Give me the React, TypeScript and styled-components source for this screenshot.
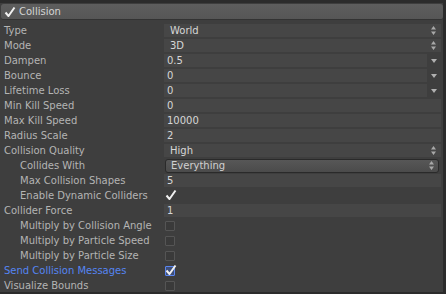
import React from "react";
import styled, { createGlobalStyle } from "styled-components";

const GlobalStyle = createGlobalStyle`
  html, body {
    margin: 0;
    padding: 0;
    background: #3e3e3e;
  }
`;

const Panel = styled.div`
  width: 446px;
  height: 294px;
  box-sizing: border-box;
  background: #3e3e3e;
  border-top: 3px solid #2c2c2c;
  border-right: 3px solid #2b2b2b;
  border-bottom: 2px solid #2b2b2b;
  font-family: "DejaVu Sans", sans-serif;
  font-size: 10px;
  color: #b4b4b4;
  overflow: hidden;
`;

const Header = styled.div`
  height: 15px;
  margin: 1px 0 3px 1px;
  display: flex;
  align-items: center;
  gap: 3px;
  padding-left: 3px;
  background: linear-gradient(#5e5e5e, #565656);
  border-bottom: 1px solid #333;
  border-radius: 3px;
  color: #d4d4d4;
`;

const Row = styled.div`
  height: 15px;
  display: grid;
  grid-template-columns: 164px 1fr;
  align-items: center;
  padding-right: 2px;
`;

const Label = styled.div<{ $indent?: boolean; $blue?: boolean }>`
  padding-left: ${(p) => (p.$indent ? 20 : 4)}px;
  white-space: nowrap;
  color: ${(p) => (p.$blue ? "#5585f2" : "#b4b4b4")};
`;

const Field = styled.div<{ $pad?: number }>`
  height: 13px;
  display: flex;
  align-items: center;
  justify-content: space-between;
  padding-left: ${(p) => p.$pad ?? 3}px;
  padding-right: 5px;
  background: #464646;
  color: #d6d6d6;
`;

const CurveWrap = styled.div`
  display: flex;
  align-items: center;
`;

const CurveField = styled(Field)`
  flex: 1;
`;

const CurveArrow = styled.div`
  width: 14px;
  display: flex;
  justify-content: center;
`;

const Popup = styled.div`
  height: 12px;
  margin: 0 2px 0 1px;
  display: flex;
  align-items: center;
  justify-content: space-between;
  padding: 0 4px 0 5px;
  border: 1px solid #2a2a2a;
  border-radius: 3px;
  background: linear-gradient(#575757, #4b4b4b);
  color: #d0d0d0;
`;

const Box = styled.div<{ $on?: boolean; $focus?: boolean }>`
  width: 8px;
  height: 8px;
  margin-left: 1px;
  position: relative;
  border: 1px solid ${(p) => (p.$focus ? "#5a86f0" : p.$on ? "transparent" : "#555")};
  background: ${(p) => (p.$focus ? "#3f4f78" : p.$on ? "transparent" : "#3a3a3a")};
  border-radius: 1px;

  svg {
    position: absolute;
    left: -1px;
    top: -3px;
  }
`;

const Check = () => (
  <svg width="12" height="12" viewBox="0 0 12 12">
    <path d="M1.5 6.5 L4.5 10 L10.5 1.5" fill="none" stroke="#f0f0f0" strokeWidth="2" strokeLinejoin="round" />
  </svg>
);

const UpDown = () => (
  <svg width="5" height="9" viewBox="0 0 5 9">
    <path d="M2.5 0 L5 3.5 H0 Z M0 5.5 H5 L2.5 9 Z" fill="#a8a8a8" />
  </svg>
);

const Down = () => (
  <svg width="6" height="4" viewBox="0 0 6 4">
    <path d="M0 0 H6 L3 4 Z" fill="#b0b0b0" />
  </svg>
);

type Item =
  | { kind: "drop"; label: string; value: string; indent?: boolean }
  | { kind: "num"; label: string; value: string; indent?: boolean }
  | { kind: "curve"; label: string; value: string }
  | { kind: "popup"; label: string; value: string; indent?: boolean }
  | { kind: "check"; label: string; on: boolean; indent?: boolean; blue?: boolean };

const items: Item[] = [
  { kind: "drop", label: "Type", value: "World" },
  { kind: "drop", label: "Mode", value: "3D" },
  { kind: "curve", label: "Dampen", value: "0.5" },
  { kind: "curve", label: "Bounce", value: "0" },
  { kind: "curve", label: "Lifetime Loss", value: "0" },
  { kind: "num", label: "Min Kill Speed", value: "0" },
  { kind: "num", label: "Max Kill Speed", value: "10000" },
  { kind: "num", label: "Radius Scale", value: "2" },
  { kind: "drop", label: "Collision Quality", value: "High" },
  { kind: "popup", label: "Collides With", value: "Everything", indent: true },
  { kind: "num", label: "Max Collision Shapes", value: "5", indent: true },
  { kind: "check", label: "Enable Dynamic Colliders", on: true, indent: true },
  { kind: "num", label: "Collider Force", value: "1" },
  { kind: "check", label: "Multiply by Collision Angle", on: false, indent: true },
  { kind: "check", label: "Multiply by Particle Speed", on: false, indent: true },
  { kind: "check", label: "Multiply by Particle Size", on: false, indent: true },
  { kind: "check", label: "Send Collision Messages", on: true, blue: true },
  { kind: "check", label: "Visualize Bounds", on: false },
];

const renderValue = (it: Item) => {
  switch (it.kind) {
    case "drop":
      return (
        <Field $pad={6}>
          <span>{it.value}</span>
          <UpDown />
        </Field>
      );
    case "num":
      return (
        <Field>
          <span>{it.value}</span>
        </Field>
      );
    case "curve":
      return (
        <CurveWrap>
          <CurveField>
            <span>{it.value}</span>
          </CurveField>
          <CurveArrow>
            <Down />
          </CurveArrow>
        </CurveWrap>
      );
    case "popup":
      return (
        <Popup>
          <span>{it.value}</span>
          <UpDown />
        </Popup>
      );
    case "check":
      return (
        <div>
          <Box $on={it.on} $focus={it.blue}>
            {it.on && <Check />}
          </Box>
        </div>
      );
  }
};

const App: React.FC = () => {
  return (
    <>
      <GlobalStyle />
      <Panel>
        <Header>
          <Check />
          <span>Collision</span>
        </Header>
        {items.map((it) => (
          <Row key={it.label}>
            <Label $indent={"indent" in it && it.indent} $blue={it.kind === "check" && it.blue}>
              {it.label}
            </Label>
            {renderValue(it)}
          </Row>
        ))}
      </Panel>
    </>
  );
};

export default App;
